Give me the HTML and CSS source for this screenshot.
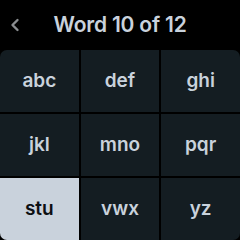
FILE: index.html
```html
<!DOCTYPE html>
<html lang="en">
<head>
  <meta charset="UTF-8">
  <meta name="viewport" content="width=device-width, initial-scale=1.0">
  <title>Word 10 of 12</title>
  <link rel="stylesheet" href="styles.css">
</head>
<body>
  <header class="topbar">
    <button class="back" aria-label="Back">
      <svg width="10" height="14" viewBox="0 0 10 14">
        <path d="M7.5 2 L2.5 7 L7.5 12" fill="none" stroke="#8a8d90" stroke-width="2.4" stroke-linecap="round" stroke-linejoin="round"/>
      </svg>
    </button>
    <h1>Word 10 of 12</h1>
  </header>

  <!-- letter groups -->
  <div class="keys">
    <div class="key">abc</div>
    <div class="key">def</div>
    <div class="key">ghi</div>
    <div class="key">jkl</div>
    <div class="key">mno</div>
    <div class="key">pqr</div>
    <div class="key selected">stu</div>
    <div class="key">vwx</div>
    <div class="key">yz</div>
  </div>
</body>
</html>
```

FILE: styles.css
```css
body {
  margin: 0;
  width: 240px;
  height: 240px;
  background-color: #000;
  font-family: Inter, "Noto Sans", sans-serif;
  display: flex;
  flex-direction: column;
  overflow: hidden;
}

.topbar {
  height: 50px;
  display: flex;
  align-items: center;
  position: relative;
  justify-content: center;
}

.back {
  position: absolute;
  left: 9px;
  top: 18px;
  background: none;
  border: none;
  padding: 0;
  width: 12px;
  height: 14px;
  display: flex;
  align-items: center;
  justify-content: center;
}

h1 {
  margin: 0;
  font-size: 21px;
  font-weight: 600;
  color: #c9d2dc;
  letter-spacing: -0.2px;
  padding-bottom: 2px;
}

.keys {
  flex: 1;
  display: grid;
  grid-template-columns: repeat(3, 1fr);
  grid-template-rows: repeat(3, 1fr);
  gap: 2px;
  border-radius: 7px;
  overflow: hidden;
}

.key {
  background-color: #141d22;
  color: #c9d2dc;
  font-size: 19px;
  font-weight: 600;
  display: flex;
  align-items: center;
  justify-content: center;
  padding-bottom: 2px;
}

.key.selected {
  background-color: #c9d2dc;
  color: #0c0f12;
}
```
